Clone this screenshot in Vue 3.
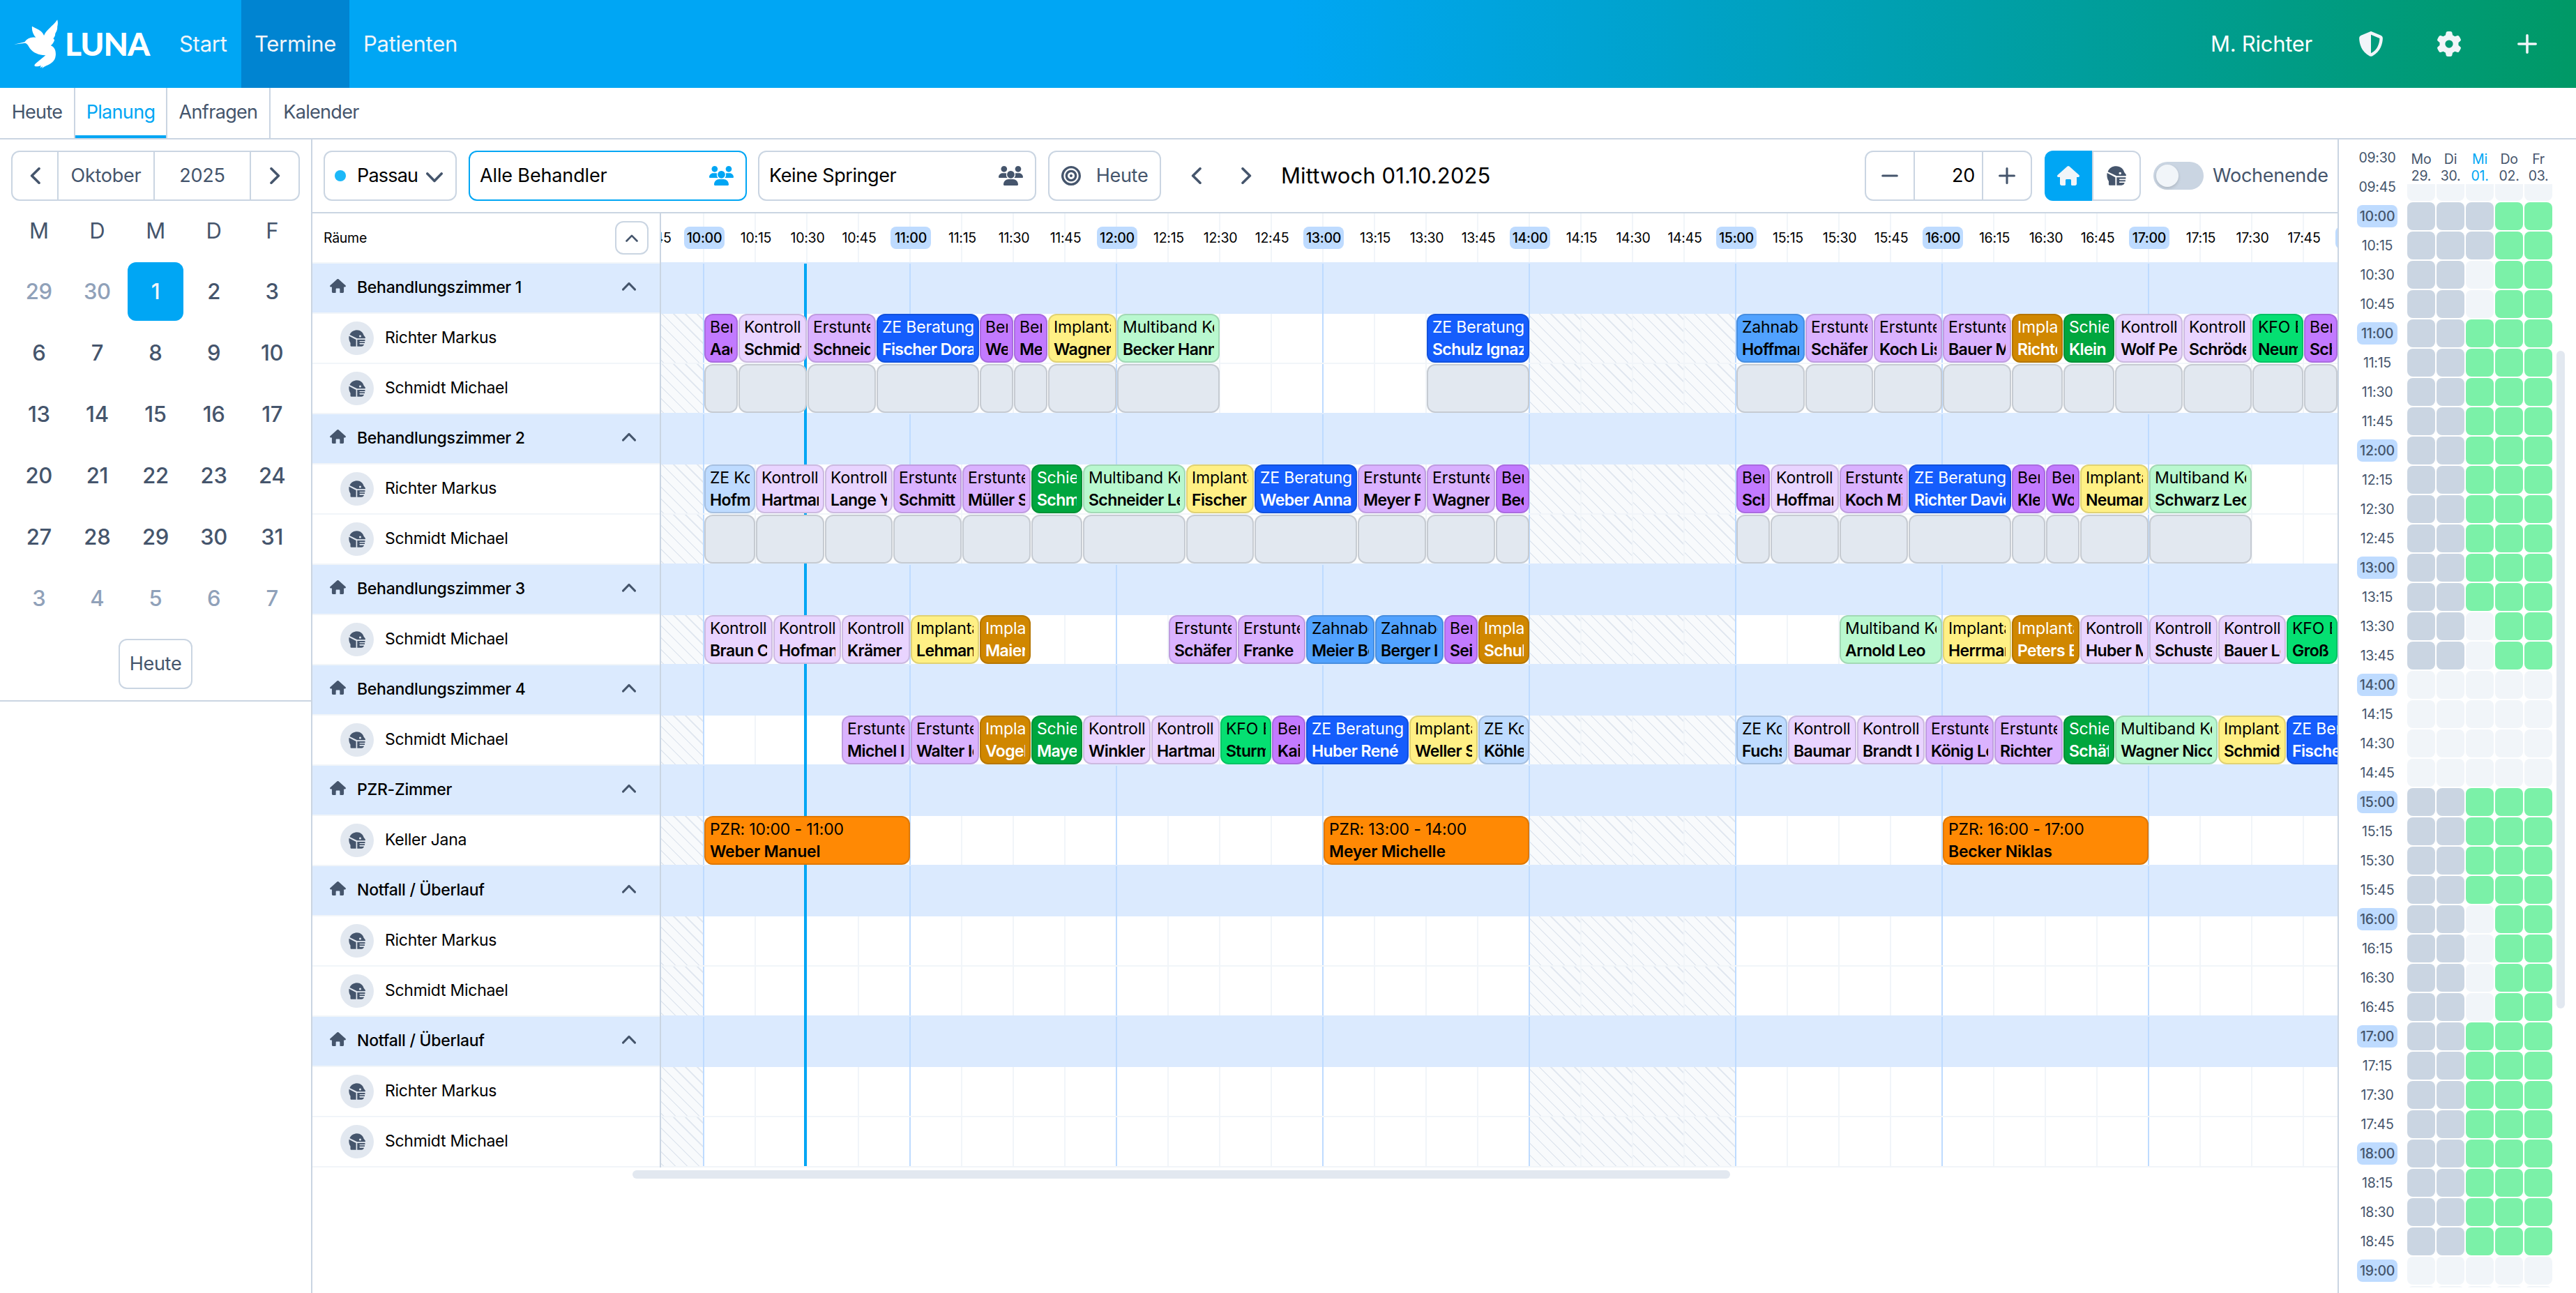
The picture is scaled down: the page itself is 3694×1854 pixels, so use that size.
<template>
  <div class="app">
    <header class="topbar">
      <div class="brand">
        <svg class="bird" viewBox="31 36 187 209">
          <path
            d="M31 143 L76 132 C88 115 104 109 124 113 C112 99 106 82 108 65 C126 76 150 80 159 105 C170 78 196 66 216 37 C220 50 218 58 216 67 C217 78 213 86 207 97 C208 104 204 110 199 117 L204 123 C201 133 196 141 188 147 C204 153 211 168 209 190 C207 218 184 228 160 238 L150 245 L154 236 L143 243 L146 233 C138 236 128 238 121 236 C115 232 120 227 127 221 L166 189 C140 190 112 178 99 160 C92 150 90 141 78 137 Z"
          />
        </svg>
        <span class="brand-name">LUNA</span>
      </div>
      <nav class="main-nav">
        <a
          v-for="item in mainNav"
          :key="item"
          :class="{ active: item === 'Termine' }"
          >{{ item }}</a
        >
      </nav>
      <div class="user-area">
        <span class="user-name">M. Richter</span>
        <button class="top-btn"><Icon name="shield" class="i36" /></button>
        <button class="top-btn"><Icon name="gear" class="i36" /></button>
        <button class="top-btn"><Icon name="plus" class="i28" /></button>
      </div>
    </header>

    <nav class="sub-nav">
      <a
        v-for="item in subNav"
        :key="item"
        :class="[item.toLowerCase(), { active: item === 'Planung' }]"
        >{{ item }}</a
      >
    </nav>

    <div class="content">
      <aside class="sidebar">
        <div class="month-box">
          <div class="month-picker">
            <button class="arrow"><Icon name="left" class="chev-v" /></button>
            <button class="month"><span>Oktober</span></button>
            <button class="month"><span>2025</span></button>
            <button class="arrow last"><Icon name="right" class="chev-v" /></button>
          </div>
          <div class="calendar">
            <span v-for="(d, i) in ['M', 'D', 'M', 'D', 'F']" :key="i" class="weekday">{{ d }}</span>
            <span
              v-for="(d, i) in days"
              :key="i"
              class="day"
              :class="{ muted: i < 2 || i > 24, selected: i === 2 }"
              ><b>{{ d }}</b></span
            >
          </div>
          <button class="btn today"><span>Heute</span></button>
        </div>
      </aside>

      <main class="planner">
        <div class="toolbar">
          <button class="btn location">
            <i class="dot"></i>
            <span>Passau</span>
            <Icon name="down" class="chev-h" />
          </button>
          <div class="btn picker focus">
            <span>Alle Behandler</span>
            <Icon name="people" class="people" />
          </div>
          <div class="btn picker">
            <span>Keine Springer</span>
            <Icon name="people" class="people" />
          </div>
          <button class="btn today-btn">
            <Icon name="target" class="i28" />
            <span>Heute</span>
          </button>
          <button class="step"><Icon name="left" class="chev-v" /></button>
          <button class="step"><Icon name="right" class="chev-v" /></button>
          <h1 class="date">Mittwoch 01.10.2025</h1>
          <div class="zoom">
            <button class="zoom-btn"><Icon name="minus" class="i24" /></button>
            <span class="zoom-value">20</span>
            <button class="zoom-btn last"><Icon name="plus" class="i24" /></button>
          </div>
          <div class="view">
            <button class="view-btn on"><Icon name="house" class="house-lg" /></button>
            <button class="view-btn"><Icon name="mask" class="i28" /></button>
          </div>
          <i class="switch"><i class="knob"></i></i>
          <span class="weekend">Wochenende</span>
        </div>

        <div class="schedule">
          <div class="rooms">
            <div class="rooms-head">
              <span>Räume</span>
              <button class="collapse"><Icon name="up" class="chev-s" /></button>
            </div>
            <template v-for="(room, r) in rooms" :key="r">
              <div class="room">
                <Icon name="house" class="house" />
                <span>{{ room.name }}</span>
                <Icon name="up" class="chev-m" />
              </div>
              <div v-for="(lane, l) in room.lanes" :key="l" class="person">
                <i class="avatar"><Icon name="mask" class="i24" /></i>
                <span>{{ lane.person }}</span>
              </div>
            </template>
          </div>

          <div class="timeline">
            <div class="hours">
              <span v-for="t in timelineTimes" :key="t" class="tick">
                <em :class="{ full: t.endsWith(':00') }">{{ t }}</em>
              </span>
            </div>
            <div class="lanes">
              <i class="now"></i>
              <template v-for="(room, r) in rooms" :key="r">
                <div class="lane-group"></div>
                <div v-for="(lane, l) in room.lanes" :key="l" class="lane">
                  <i class="closed morning"></i>
                  <i class="closed noon"></i>
                  <div
                    v-for="(slot, s) in lane.slots"
                    :key="s"
                    class="slot"
                    :class="slot.kind"
                    :style="{ marginLeft: slot.gap + 'px', width: slot.width + 'px' }"
                  >
                    <template v-if="slot.kind !== 'blocked'">
                      <span>{{ slot.title }}</span>
                      <strong>{{ slot.patient }}</strong>
                    </template>
                  </div>
                </div>
              </template>
            </div>
          </div>
        </div>
        <div class="h-scroll"></div>
      </main>

      <aside class="week">
        <div class="week-times">
          <span v-for="t in weekTimes" :key="t" class="week-time">
            <em :class="{ full: t.endsWith(':00') }">{{ t }}</em>
          </span>
        </div>
        <div class="week-grid">
          <div class="week-head">
            <span v-for="d in weekDays" :key="d[0]" :class="{ current: d[0] === 'Mi' }"
              >{{ d[0] }}<br />{{ d[1] }}</span
            >
          </div>
          <div class="week-body">
            <div class="week-cells">
              <i v-for="(c, i) in weekCells" :key="i" :class="c"></i>
            </div>
          </div>
        </div>
        <div class="v-scroll"></div>
      </aside>
    </div>
  </div>
</template>

<script setup>
import { h } from "vue";

const icons = {
  left: { box: "0 0 15 24", line: "M13 1.8 L2.6 12 L13 22.2" },
  right: { box: "0 0 15 24", line: "M2 1.8 L12.4 12 L2 22.2" },
  down: { box: "0 0 24 15", line: "M1.8 2 L12 12.4 L22.2 2" },
  up: { box: "0 0 24 15", line: "M1.8 13 L12 2.6 L22.2 13" },
  plus: { box: "0 0 28 28", line: "M14 1.8 V26.2 M1.8 14 H26.2" },
  minus: { box: "0 0 28 28", line: "M2 14 H26" },
  house: {
    box: "0 0 32 28",
    fill: "M16 0 C16.5 0 17 .2 17.4 .5 L31.4 13 C32.6 14.2 31.8 16 30.3 16 H28 V25.5 C28 27 27 28 25.5 28 H21.5 C20.6 28 20 27.4 20 26.5 V20.5 C20 19.6 19.4 19 18.5 19 H13.5 C12.6 19 12 19.6 12 20.5 V26.5 C12 27.4 11.4 28 10.5 28 H6.5 C5 28 4 27 4 25.5 V16 H1.7 C.2 16 -.6 14.2 .6 13 L14.6 .5 C15 .2 15.5 0 16 0 Z",
  },
  mask: {
    box: "0 0 86 84",
    fill: "M5 24 C11 8 25 0 42 0 C60 0 74 12 77 26 L85 37 C87 40 85 43 82 43 H44 L5 24 Z M59 26 A5.5 5.5 0 1 0 59 37 A5.5 5.5 0 1 0 59 26 Z M2 30 L38 49 V84 H13 C10 84 9 82 9 80 V66 C2 56 0 43 2 30 Z M44 49 H84 V56 H58 C54 56 54 61 58 61 H83 L82 67 H58 C54 67 54 73 58 73 H79 C77 80 72 84 65 84 H44 Z",
  },
  people: {
    box: "0 0 105 84",
    fill: "M23.500 0 A13 13 0 1 1 23.400 0 Z M84 0 A13 13 0 1 1 83.900 0 Z M52.500 21 A16 16 0 1 1 52.400 21 Z M3 51 C1 51 0 50 0 48 C0 39 8 31 17 31 H30 L34 32 C31 40 33 46 38 51 Z M102 51 C104 51 105 50 105 48 C105 39 97 31 88 31 H75 L71 32 C74 40 72 46 67 51 Z M25 84 C22 84 21 82 21 79 C22 66 31 57 43 57 H62 C74 57 83 66 84 79 C84 82 83 84 80 84 Z",
  },
  target: {
    box: "0 0 84 84",
    fill: "M42 0 A42 42 0 1 1 41.900 0 Z M42 10 A32 32 0 1 0 42.100 10 Z M42 17 A25 25 0 1 1 41.900 17 Z M42 27 A15 15 0 1 0 42.100 27 Z M42 36 A6 6 0 1 1 41.900 36 Z",
  },
  shield: {
    box: "0 0 512 512",
    fill: "M256 0c4.600 0 9.200 1 13.400 2.900L457.700 82.800c22 9.300 38.400 31 38.300 57.200c-.5 99.200-41.300 280.700-213.600 363.200c-16.700 8-36.100 8-52.800 0C57.300 420.700 16.500 239.200 16 140c-.1-26.200 16.300-47.900 38.300-57.200L242.700 2.900C246.800 1 251.400 0 256 0zm0 66.800V444.800C394 378 431.100 230.100 432 141.400L256 66.800z",
  },
  gear: {
    box: "0 0 512 512",
    fill: "M495.900 166.600c3.200 8.700 .5 18.400-6.400 24.600l-43.300 39.400c1.100 8.300 1.700 16.800 1.700 25.400s-.6 17.100-1.700 25.400l43.300 39.400c6.900 6.200 9.600 15.900 6.400 24.600c-4.400 11.900-9.700 23.300-15.800 34.300l-4.700 8.100c-6.600 11-14 21.400-22.100 31.200c-5.900 7.200-15.700 9.600-24.500 6.800l-55.700-17.700c-13.400 10.300-28.200 18.900-44 25.400l-12.500 57.100c-2 9.100-9 16.300-18.200 17.800c-13.800 2.300-28 3.500-42.500 3.500s-28.700-1.200-42.500-3.500c-9.200-1.500-16.200-8.700-18.200-17.800l-12.500-57.100c-15.800-6.500-30.600-15.100-44-25.400L83.100 425.900c-8.800 2.800-18.600 .3-24.500-6.800c-8.100-9.800-15.500-20.200-22.100-31.200l-4.700-8.100c-6.100-11-11.400-22.400-15.800-34.300c-3.200-8.700-.5-18.400 6.400-24.600l43.300-39.400C64.600 273.100 64 264.600 64 256s.6-17.100 1.700-25.400L22.400 191.200c-6.900-6.200-9.600-15.900-6.400-24.600c4.400-11.900 9.700-23.300 15.800-34.300l4.700-8.100c6.600-11 14-21.400 22.100-31.200c5.900-7.200 15.700-9.600 24.500-6.800l55.700 17.700c13.400-10.300 28.200-18.900 44-25.400l12.500-57.100c2-9.100 9-16.300 18.200-17.800C227.300 1.200 241.500 0 256 0s28.700 1.200 42.500 3.500c9.200 1.500 16.200 8.700 18.200 17.800l12.500 57.100c15.800 6.500 30.600 15.100 44 25.400l55.700-17.700c8.800-2.800 18.600-.3 24.500 6.800c8.100 9.800 15.500 20.200 22.100 31.200l4.700 8.100c6.100 11 11.400 22.400 15.800 34.300zM256 336a80 80 0 1 0 0-160 80 80 0 1 0 0 160z",
  },
};

const Icon = ({ name }) => {
  const icon = icons[name];
  return h("svg", { viewBox: icon.box }, [
    icon.fill
      ? h("path", { d: icon.fill, fill: "currentColor", "fill-rule": "evenodd" })
      : h("path", {
          d: icon.line,
          fill: "none",
          stroke: "currentColor",
          "stroke-width": 3.6,
          "stroke-linecap": "round",
          "stroke-linejoin": "round",
        }),
  ]);
};
Icon.props = ["name"];

const mainNav = ["Start", "Termine", "Patienten"];
const subNav = ["Heute", "Planung", "Anfragen", "Kalender"];

const days = [
  29, 30, 1, 2, 3, 6, 7, 8, 9, 10, 13, 14, 15, 16, 17, 20, 21, 22, 23, 24, 27,
  28, 29, 30, 31, 3, 4, 5, 6, 7,
];

const titles = {
  ber: "Beratung",
  kon: "Kontrolle",
  erst: "Erstuntersuchung",
  ze: "ZE Beratung",
  imp: "Implantat",
  implant: "Implantat",
  multi: "Multiband Kontrolle",
  zahn: "Zahnabdruck",
  schiene: "Schiene",
  kfo: "KFO Beratung",
  zek: "ZE Kontrolle",
};

// pixels for minutes after 10:00, one hour is 296px wide
const px = (min) => Math.round((min * 296) / 60);

// [start, end, kind, patient, title?]
const toSlots = (list) => {
  let last = 0;
  return list.map(([start, end, kind, patient, title]) => {
    const slot = {
      kind,
      patient,
      title: title || titles[kind],
      gap: px(start) - last,
      width: px(end) - px(start) - 1,
    };
    last = px(end) - 1;
    return slot;
  });
};

const block = (list) => list.map(([start, end]) => [start, end, "blocked"]);

const room1 = [
  [0, 10, "ber", "Aachen"],
  [10, 30, "kon", "Schmidt"],
  [30, 50, "erst", "Schneider"],
  [50, 80, "ze", "Fischer Dora"],
  [80, 90, "ber", "Weber"],
  [90, 100, "ber", "Meyer"],
  [100, 120, "imp", "Wagner"],
  [120, 150, "multi", "Becker Hanna"],
  [210, 240, "ze", "Schulz Ignaz"],
  [300, 320, "zahn", "Hoffmann"],
  [320, 340, "erst", "Schäfer"],
  [340, 360, "erst", "Koch Lisa"],
  [360, 380, "erst", "Bauer Max"],
  [380, 395, "implant", "Richter"],
  [395, 410, "schiene", "Klein"],
  [410, 430, "kon", "Wolf Peter"],
  [430, 450, "kon", "Schröder"],
  [450, 465, "kfo", "Neumann"],
  [465, 475, "ber", "Schwarz"],
];

const room2 = [
  [0, 15, "zek", "Hofmann"],
  [15, 35, "kon", "Hartmann"],
  [35, 55, "kon", "Lange Yara"],
  [55, 75, "erst", "Schmitt"],
  [75, 95, "erst", "Müller Sara"],
  [95, 110, "schiene", "Schmitz"],
  [110, 140, "multi", "Schneider Leo"],
  [140, 160, "imp", "Fischer"],
  [160, 190, "ze", "Weber Anna"],
  [190, 210, "erst", "Meyer Finn"],
  [210, 230, "erst", "Wagner"],
  [230, 240, "ber", "Becker"],
  [300, 310, "ber", "Schulz"],
  [310, 330, "kon", "Hoffmann"],
  [330, 350, "erst", "Koch Mia"],
  [350, 380, "ze", "Richter David"],
  [380, 390, "ber", "Klein"],
  [390, 400, "ber", "Wolf"],
  [400, 420, "imp", "Neumann"],
  [420, 450, "multi", "Schwarz Leo"],
];

const room3 = [
  [0, 20, "kon", "Braun Carl"],
  [20, 40, "kon", "Hofmann"],
  [40, 60, "kon", "Krämer"],
  [60, 80, "imp", "Lehmann"],
  [80, 95, "implant", "Maier"],
  [135, 155, "erst", "Schäfer"],
  [155, 175, "erst", "Franke"],
  [175, 195, "zahn", "Meier Ben"],
  [195, 215, "zahn", "Berger Ida"],
  [215, 225, "ber", "Seidel"],
  [225, 240, "implant", "Schubert"],
  [330, 360, "multi", "Arnold Leo"],
  [360, 380, "imp", "Herrmann"],
  [380, 400, "implant", "Peters Eva"],
  [400, 420, "kon", "Huber Max"],
  [420, 440, "kon", "Schuster"],
  [440, 460, "kon", "Bauer Lea"],
  [460, 475, "kfo", "Groß"],
];

const room4 = [
  [40, 60, "erst", "Michel Ina"],
  [60, 80, "erst", "Walter Ida"],
  [80, 95, "implant", "Vogel"],
  [95, 110, "schiene", "Mayer"],
  [110, 130, "kon", "Winkler"],
  [130, 150, "kon", "Hartmann"],
  [150, 165, "kfo", "Sturm"],
  [165, 175, "ber", "Kaiser"],
  [175, 205, "ze", "Huber René"],
  [205, 225, "imp", "Weller Sia"],
  [225, 240, "zek", "Köhler"],
  [300, 315, "zek", "Fuchs"],
  [315, 335, "kon", "Baumann"],
  [335, 355, "kon", "Brandt Ida"],
  [355, 375, "erst", "König Léo"],
  [375, 395, "erst", "Richter"],
  [395, 410, "schiene", "Schäfer"],
  [410, 440, "multi", "Wagner Nico"],
  [440, 460, "imp", "Schmidt"],
  [460, 490, "ze", "Fischer Tom"],
];

const pzr = [
  [0, 60, "pzr", "Weber Manuel", "PZR: 10:00 - 11:00"],
  [180, 240, "pzr", "Meyer Michelle", "PZR: 13:00 - 14:00"],
  [360, 420, "pzr", "Becker Niklas", "PZR: 16:00 - 17:00"],
];

const lane = (person, list = []) => ({ person, slots: toSlots(list) });

const rooms = [
  {
    name: "Behandlungszimmer 1",
    lanes: [lane("Richter Markus", room1), lane("Schmidt Michael", block(room1))],
  },
  {
    name: "Behandlungszimmer 2",
    lanes: [lane("Richter Markus", room2), lane("Schmidt Michael", block(room2))],
  },
  { name: "Behandlungszimmer 3", lanes: [lane("Schmidt Michael", room3)] },
  { name: "Behandlungszimmer 4", lanes: [lane("Schmidt Michael", room4)] },
  { name: "PZR-Zimmer", lanes: [lane("Keller Jana", pzr)] },
  { name: "Notfall / Überlauf", lanes: [lane("Richter Markus"), lane("Schmidt Michael")] },
  { name: "Notfall / Überlauf", lanes: [lane("Richter Markus"), lane("Schmidt Michael")] },
];

const quarters = (from, to) => {
  const list = [];
  for (let m = from; m <= to; m += 15) {
    const hh = String(Math.floor(m / 60)).padStart(2, "0");
    const mm = String(m % 60).padStart(2, "0");
    list.push(`${hh}:${mm}`);
  }
  return list;
};

const timelineTimes = quarters(585, 1080);
const weekTimes = quarters(570, 1140);

const weekDays = [
  ["Mo", "29."],
  ["Di", "30."],
  ["Mi", "01."],
  ["Do", "02."],
  ["Fr", "03."],
];

const stateAt = (t, day) => {
  const open = (t >= "10:00" && t < "14:00") || (t >= "15:00" && t < "19:00");
  if (!open) return "";
  if (day < 2) return "past";
  if (day > 2) return "free";
  if (t < "10:30") return "past";
  if (t < "11:00" || (t >= "13:30" && t < "14:00") || (t >= "16:00" && t < "17:00")) return "";
  return "free";
};

const weekCells = quarters(585, 1155).flatMap((t) => weekDays.map((_, d) => stateAt(t, d)));
</script>

<style>
body {
  margin: 0;
  background: #fff;
}
</style>

<style scoped>
.app {
  width: 3694px;
  height: 1854px;
  display: flex;
  flex-direction: column;
  overflow: hidden;
  background: #fff;
  color: #000;
  font-family: Inter, "Liberation Sans", sans-serif;
  font-size: 27px;
  letter-spacing: -0.01em;
}

.app * {
  box-sizing: border-box;
}

button {
  font: inherit;
  letter-spacing: inherit;
  color: #45556c;
  background: none;
  border: 0;
  padding: 0;
  margin: 0;
  display: flex;
  align-items: center;
  justify-content: center;
}

svg {
  display: block;
  flex: none;
}

i,
em {
  font-style: normal;
}

.i24 { width: 24px; height: 24px; }
.i28 { width: 28px; height: 28px; }
.i36 { width: 36px; height: 36px; }
.chev-v { width: 15px; height: 24px; }
.chev-h { width: 24px; height: 15px; }
.chev-m { width: 20px; height: 13px; }
.chev-s { width: 18px; height: 11px; }
.people { width: 35px; height: 28px; }
.house { width: 23px; height: 20px; }
.house-lg { width: 32px; height: 28px; }

/* top bar */
.topbar {
  height: 126px;
  flex: none;
  display: flex;
  background: linear-gradient(to right, #00a6f4 50%, #009966);
  color: #fff;
  font-size: 31px;
}

.brand {
  width: 237px;
  padding-left: 20px;
  display: flex;
  align-items: center;
  gap: 10px;
}

.bird {
  width: 63px;
  height: 70px;
  fill: #fff;
}

.brand-name {
  padding-bottom: 2px;
  font-family: Lato, sans-serif;
  font-weight: 900;
  font-size: 46px;
  letter-spacing: -1px;
}

.main-nav {
  display: flex;
}

.main-nav a {
  display: flex;
  align-items: center;
  padding: 0 20px 2px;
  color: #f1f5f9;
}

.main-nav a:first-child {
  width: 109px;
}

.main-nav a.active {
  width: 155px;
  justify-content: center;
  padding: 0 0 2px;
  background: #0084d1;
}

.user-area {
  margin-left: auto;
  display: flex;
  align-items: center;
  padding-right: 14px;
}

.user-name {
  margin-right: 28px;
  padding-bottom: 2px;
}

.top-btn {
  width: 112px;
  height: 126px;
  color: #f1f5f9;
}

/* second navigation */
.sub-nav {
  height: 74px;
  flex: none;
  display: flex;
  border-bottom: 2px solid #cad5e2;
  color: #45556c;
  letter-spacing: -0.025em;
}

.sub-nav a {
  display: flex;
  align-items: center;
  justify-content: center;
  padding-bottom: 3px;
  border-right: 2px solid #cad5e2;
}

.heute { width: 108px; }
.planung { width: 132px; }
.anfragen { width: 148px; }
.kalender { width: 145px; }

.sub-nav a:last-child {
  border-right: 0;
}

.sub-nav a.active {
  color: #00a6f4;
  box-shadow: inset 0 -4px #00a6f4;
}

.content {
  flex: 1;
  display: flex;
  min-height: 0;
}

/* calendar */
.sidebar {
  width: 448px;
  flex: none;
  border-right: 2px solid #cad5e2;
}

.month-box {
  height: 806px;
  padding-top: 16px;
  border-bottom: 2px solid #cad5e2;
}

.month-picker {
  width: 414px;
  height: 72px;
  margin-left: 16px;
  display: flex;
  border: 2px solid #cad5e2;
  border-radius: 12px;
}

.month-picker button {
  border-right: 2px solid #cad5e2;
}

.month-picker .arrow {
  width: 66px;
}

.month-picker .month {
  flex: 1;
}

.month span,
.btn span {
  padding-bottom: 2px;
}

.month-picker .last {
  width: 68px;
  border-right: 0;
}

.calendar {
  margin: 0 14px;
  display: grid;
  grid-template-columns: repeat(5, 1fr);
  grid-template-rows: 86px;
  grid-auto-rows: 88px;
  justify-items: center;
  align-items: center;
  font-size: 31px;
  color: #45556c;
}

.weekday {
  padding-bottom: 2px;
}

.day b {
  width: 80px;
  height: 84px;
  display: flex;
  align-items: center;
  justify-content: center;
  padding-bottom: 1px;
  border-radius: 12px;
  font-weight: 500;
}

.day.muted {
  color: #90a1b9;
}

.day.selected b {
  background: #00a6f4;
  color: #f1f5f9;
}

.btn {
  height: 72px;
  border: 2px solid #cad5e2;
  border-radius: 12px;
  display: flex;
  align-items: center;
}

.today {
  width: 106px;
  margin: 14px 0 0 170px;
}

/* toolbar */
.planner {
  width: 2906px;
  flex: none;
  border-right: 2px solid #cad5e2;
  min-width: 0;
}

.toolbar {
  height: 106px;
  padding: 0 16px;
  display: flex;
  align-items: center;
  border-bottom: 2px solid #cad5e2;
}

.location {
  width: 191px;
  margin-right: 17px;
  justify-content: flex-start;
  padding-left: 14px;
}

.location span {
  width: 99px;
  text-align: left;
  color: #000;
  letter-spacing: -0.03em;
}

.location svg {
  margin-top: 4px;
}

.dot {
  width: 16px;
  height: 16px;
  margin-right: 16px;
  border-radius: 50%;
  background: #1cb8f8;
}

.picker {
  width: 399px;
  margin-right: 16px;
  padding: 0 17px 0 14px;
  justify-content: space-between;
  letter-spacing: -0.015em;
}

.picker svg {
  color: #45556c;
}

.picker.focus {
  border-color: #00a6f4;
  letter-spacing: -0.005em;
}

.picker.focus svg {
  color: #00a6f4;
}

.today-btn {
  width: 162px;
  gap: 22px;
  margin: 0 15px 0 1px;
}

.step {
  width: 71px;
  height: 72px;
}

.step + .step {
  width: 72px;
}

.date {
  margin: 0 0 0 14px;
  padding-bottom: 2px;
  font-size: 31px;
  font-weight: 400;
  letter-spacing: 0.1px;
}

.zoom {
  width: 240px;
  height: 72px;
  margin-left: auto;
  display: flex;
  border: 2px solid #cad5e2;
  border-radius: 12px;
}

.zoom-btn {
  width: 68px;
}

.zoom-value {
  flex: 1;
  display: flex;
  align-items: center;
  justify-content: flex-end;
  padding: 0 10px 2px 0;
  border: solid #cad5e2;
  border-width: 0 2px;
}

.view {
  display: flex;
  width: 138px;
  height: 72px;
  margin-left: 18px;
}

.view-btn {
  width: 70px;
  border: 2px solid #cad5e2;
  border-radius: 0 12px 12px 0;
}

.view-btn.on {
  width: 68px;
  background: #00a6f4;
  border: 0;
  border-radius: 12px 0 0 12px;
  color: #f1f5f9;
}

.switch {
  width: 72px;
  height: 40px;
  margin-left: 18px;
  padding: 4px;
  border-radius: 20px;
  background: #cad5e2;
}

.knob {
  display: block;
  width: 32px;
  height: 32px;
  border-radius: 50%;
  background: #f1f5f9;
  box-shadow: 0 2px 4px rgba(0, 0, 0, 0.15);
}

.weekend {
  width: 163px;
  margin-left: 13px;
  padding-bottom: 2px;
  color: #45556c;
}

/* schedule */
.schedule {
  display: flex;
  height: 1368px;
}

.rooms {
  width: 500px;
  flex: none;
  border-right: 2px solid #cad5e2;
  font-size: 23px;
}

.rooms-head {
  height: 72px;
  padding: 0 16px;
  display: flex;
  align-items: center;
  justify-content: space-between;
  border-bottom: 2px solid #f1f5f9;
  font-size: 19.5px;
}

.collapse {
  width: 48px;
  height: 48px;
  border: 2px solid #cad5e2;
  border-radius: 12px;
}

.room,
.person {
  height: 72px;
  display: flex;
  align-items: center;
  border-bottom: 2px solid #f1f5f9;
}

.room {
  padding: 0 34px 0 25px;
  background: #dbeafe;
  font-weight: 500;
}

.room svg {
  color: #45556c;
  margin-bottom: 6px;
}

.room span {
  flex: 1;
  margin-left: 16px;
  padding-bottom: 2px;
}

.person {
  padding-left: 40px;
  gap: 16px;
}

.person > span {
  padding-bottom: 2px;
}

.avatar {
  width: 48px;
  height: 48px;
  border-radius: 50%;
  display: flex;
  align-items: center;
  justify-content: center;
  background: #e2e8f0;
  color: #45556c;
}

.timeline {
  flex: 1;
  min-width: 0;
  overflow: hidden;
}

.hours {
  height: 70px;
  display: flex;
  align-items: center;
  background: linear-gradient(to right, #f1f5f9 2px, transparent 2px) 60px 0 / 74px 100%;
  font-size: 19.5px;
}

.tick {
  width: 74px;
  flex: none;
  display: flex;
  justify-content: center;
}

.tick:first-child {
  margin-left: -49px;
}

.tick em,
.week-time em {
  width: 58px;
  height: 32px;
  display: flex;
  align-items: center;
  justify-content: center;
  padding-bottom: 1px;
  border-radius: 8px;
}

em.full {
  background: #bedbff;
  font-weight: 500;
}

.lanes {
  position: relative;
  padding-top: 2px;
}

.now {
  position: absolute;
  left: 205px;
  top: 2px;
  bottom: 2px;
  width: 4px;
  background: #00a6f4;
  z-index: 2;
}

.lane-group {
  height: 72px;
  position: relative;
  background: linear-gradient(to right, #bedbff 2px, transparent 2px) 60px 0 / 296px 100% #dbeafe;
  box-shadow: 0 -2px #dbeafe;
}

.lane {
  height: 72px;
  display: flex;
  position: relative;
  padding-left: 62px;
  border-bottom: 2px solid #f1f5f9;
  background: linear-gradient(to right, #bedbff 2px, transparent 2px) 60px 0 / 296px 100%,
    linear-gradient(to right, #f1f5f9 2px, transparent 2px) 60px 0 / 74px 100%;
}

.closed {
  position: absolute;
  top: 0;
  bottom: 0;
  background: linear-gradient(to left, #f1f5f9 2px, transparent 2px) 0 0 / 74px 100%,
    repeating-linear-gradient(45deg, transparent 0 10px, #e2e8f0 10px 12px) 0 0 / 74px 100%,
    #f8fafc;
}

.closed.morning {
  left: 0;
  width: 60px;
  background-position-x: -12px;
}

.closed.noon {
  left: 1246px;
  width: 294px;
}

.slot {
  flex: none;
  height: 70px;
  padding: 1px 6px;
  border: 2px solid rgba(0, 0, 0, 0.12);
  border-radius: 12px;
  position: relative;
  z-index: 3;
  font-size: 23px;
  line-height: 32px;
}

.slot span,
.slot strong {
  display: block;
  overflow: hidden;
  white-space: nowrap;
}

.slot span {
  letter-spacing: -0.006em;
}

.slot strong {
  font-weight: 600;
  letter-spacing: -0.026em;
}

.slot.pzr strong {
  letter-spacing: -0.01em;
}

.blocked { background: #e2e8f0; }
.ber { background: #c27aff; }
.kon { background: #e9d4ff; }
.erst { background: #dab2ff; }
.ze { background: #155dfc; color: #fff; }
.imp { background: #fff085; }
.implant { background: #d08700; color: #fff; }
.multi { background: #b9f8cf; }
.zahn { background: #51a2ff; }
.schiene { background: #00a63e; color: #fff; }
.kfo { background: #05df72; }
.zek { background: #bedbff; }
.pzr { background: #ff8904; }

.h-scroll {
  width: 1574px;
  height: 12px;
  margin: 4px 0 0 459px;
  border-radius: 6px;
  background: #e2e8f0;
}

/* week overview */
.week {
  flex: 1;
  display: flex;
  height: 1646px;
  overflow: hidden;
  color: #45556c;
  font-size: 19.5px;
}

.week-times {
  padding: 5px 0 0 26px;
}

.week-time {
  height: 42px;
  display: flex;
  align-items: center;
}

.week-grid {
  margin-left: 14px;
  display: flex;
  flex-direction: column;
}

.week-head {
  height: 64px;
  padding-top: 16px;
  flex: none;
  display: grid;
  grid-template-columns: repeat(5, 40px);
  gap: 2px;
  text-align: center;
  line-height: 24px;
}

.week-head .current {
  color: #00a6f4;
}

.week-body {
  flex: 1;
  overflow: hidden;
}

.week-cells {
  margin-top: -16px;
  display: grid;
  grid-template-columns: repeat(5, 40px);
  grid-auto-rows: 40px;
  gap: 2px;
}

.week-cells i {
  border-radius: 8px;
  background: #f1f5f9;
}

.week-cells .past {
  background: #cad5e2;
}

.week-cells .free {
  background: #7bf1a8;
}

.v-scroll {
  width: 12px;
  height: 943px;
  margin: 303px 0 0 6px;
  border-radius: 6px;
  background: #e2e8f0;
}
</style>
